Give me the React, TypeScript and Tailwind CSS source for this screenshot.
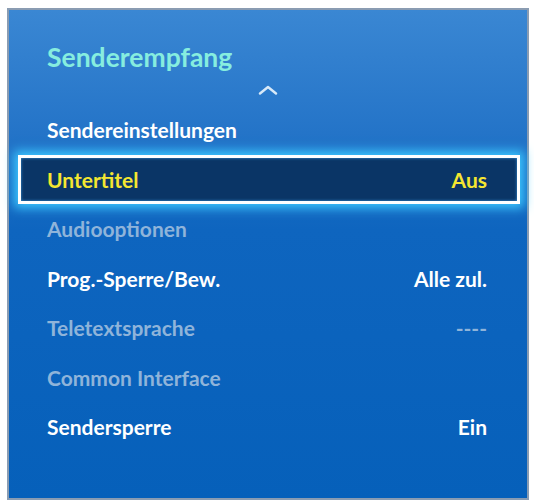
const ROWS: { label: string; value?: string; state: 'on' | 'off' | 'focus' }[] = [
  { label: 'Sendereinstellungen', state: 'on' },
  { label: 'Untertitel', value: 'Aus', state: 'focus' },
  { label: 'Audiooptionen', state: 'off' },
  { label: 'Prog.-Sperre/Bew.', value: 'Alle zul.', state: 'on' },
  { label: 'Teletextsprache', value: '----', state: 'off' },
  { label: 'Common Interface', state: 'off' },
  { label: 'Sendersperre', value: 'Ein', state: 'on' },
];

export default function App() {
  return (
    <div className="w-[534px] h-[504px] bg-white pt-[8px] pl-[7px] font-['Lato','Liberation_Sans',sans-serif]">
      <div className="w-[522px] h-[492px] border-2 border-[#8a9cb2] bg-gradient-to-b from-[#3a87d3] via-[#0e65bf] via-45% to-[#0660ba] flex flex-col">
        {/* Title */}
        <div className="pt-[32px] pl-[38px] text-[26.5px] leading-[30px] font-bold text-[#86eddf]">Senderempfang</div>

        {/* Up arrow */}
        <div className="mt-[13px] h-[10px] flex justify-center">
          <svg width="20" height="10" viewBox="0 0 20 10" fill="none">
            <path d="M2 8.5 L10 2 L18 8.5" stroke="#d8e9f8" strokeWidth="2.4" strokeLinecap="round" strokeLinejoin="round" />
          </svg>
        </div>

        {/* Menu */}
        <div className="mt-[10px] flex flex-col">
          {ROWS.map((r, i) => (
            <div
              key={i}
              className={`h-[49.5px] ml-[9px] mr-[7px] pl-[26px] pr-[30px] border-[3px] flex items-center justify-between text-[21px] font-bold
                ${r.state === 'focus' ? 'border-white bg-[#0a3566] text-[#f4e631] shadow-[0_0_10px_4px_#3cc8ff,inset_0_0_3px_#3c9ae0]' : 'border-transparent'}
                ${r.state === 'on' ? 'text-white' : ''}
                ${r.state === 'off' ? 'text-[#8fb4da]' : ''}`}
            >
              <span>{r.label}</span>
              {r.value && <span>{r.value}</span>}
            </div>
          ))}
        </div>
      </div>
    </div>
  );
}
